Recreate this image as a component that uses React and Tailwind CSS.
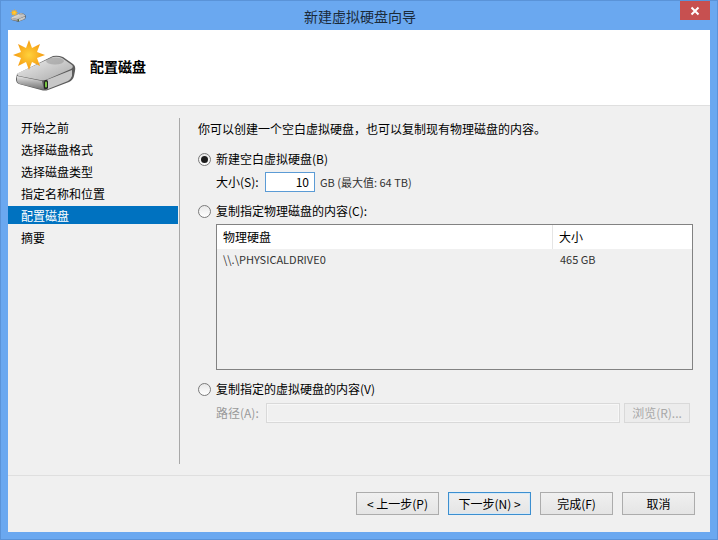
const font = '"Noto Sans CJK SC", "Liberation Sans", sans-serif';

const steps = ["开始之前", "选择磁盘格式", "选择磁盘类型", "指定名称和位置", "配置磁盘", "摘要"];

const DiskIcon = ({ size = 64, id = "a" }) => (
  <svg width={size} height={size * 0.875} viewBox="0 0 64 56">
    <defs>
      <linearGradient id={`${id}top`} x1="0" y1="0" x2="1" y2="1">
        <stop offset="0" stopColor="#f2f2f2" />
        <stop offset="1" stopColor="#a9a9a9" />
      </linearGradient>
      <linearGradient id={`${id}front`} x1="0" y1="0" x2="0" y2="1">
        <stop offset="0" stopColor="#e6e6e6" />
        <stop offset="0.5" stopColor="#a8a8a8" />
        <stop offset="1" stopColor="#6f6f6f" />
      </linearGradient>
      <radialGradient id={`${id}sun`}>
        <stop offset="0" stopColor="#ffd23c" />
        <stop offset="1" stopColor="#f59a10" />
      </radialGradient>
    </defs>
    <path d="M5 34 L41 16 Q46 15 51 17 L61 24 Q64 26 63 31 L62 36 Q61 40 57 42 L36 50 Q33 51 29 50 L7 44 Q4 43 4 39 Z" fill="#5c5c5c" />
    <path d="M6 33 L41 17 Q46 16 50 18 L60 25 Q62 27 59 29 L36 39 Q32 41 28 40 L7 36 Q4 35 6 33 Z" fill={`url(#${id}top)`} />
    <ellipse cx="43" cy="21" rx="9" ry="3.5" fill="#8f8f8f" opacity="0.5" />
    <path d="M5 36 L30 41 L32 50 L8 44 Q5 43 5 40 Z" fill={`url(#${id}front)`} />
    <path d="M32 41 L60 30 L60 36 Q59 39 56 41 L36 49 Q33 50 33 48 Z" fill="#c8c8c8" />
    <rect x="32" y="40" width="4" height="9" rx="1.5" fill="#222" />
    <rect x="33" y="41.5" width="2" height="6" rx="1" fill="#7ac943" />
    <path
      d="M17 0 L20 8 L28 4 L25 12 L33 15 L25 18 L28 26 L20 22 L17 30 L14 22 L6 26 L9 18 L1 15 L9 12 L6 4 L14 8 Z"
      fill={`url(#${id}sun)`}
    />
  </svg>
);

const Radio = ({ checked, label, disabled }) => (
  <label className="flex items-center h-[18px] text-[12px] leading-[18px] text-black">
    <span className="w-[13px] h-[13px] rounded-full border border-[#7a7a7a] bg-gradient-to-b from-[#e8e8e8] to-white flex items-center justify-center mr-[5px]">
      {checked && <span className="w-[7px] h-[7px] rounded-full bg-[#1c1c1c]" />}
    </span>
    <span className={disabled ? "text-[#8a8a8a]" : ""}>{label}</span>
  </label>
);

const Button = ({ children, primary, className = "" }) => (
  <button
    className={`h-[23px] border text-[12px] leading-[21px] text-black bg-gradient-to-b from-[#f0f0f0] to-[#e5e5e5] ${
      primary ? "border-[#3c8fd0] shadow-[inset_0_0_0_1px_#d6e9f7]" : "border-[#acacac]"
    } ${className}`}
  >
    {children}
  </button>
);

export default function App() {
  return (
    <div
      className="w-[718px] h-[540px] bg-[#6aa8f0] border border-[#5a93d8] flex flex-col overflow-hidden"
      style={{ fontFamily: font }}
    >
      {/* Title bar */}
      <div className="h-[29px] shrink-0 grid grid-cols-[1fr_auto_1fr] pl-[9px] pr-[7px]">
        <div className="pt-[8px]">
          <DiskIcon size={16} id="t" />
        </div>
        <div className="text-[14px] leading-[30px] text-[#1a2a3a]">新建虚拟硬盘向导</div>
        <div className="flex justify-end">
          <div className="w-[30px] h-[19px] bg-[#c75050] flex items-center justify-center">
            <svg width="10" height="10" viewBox="0 0 10 10">
              <path d="M1.5 1.5 L8.5 8.5 M8.5 1.5 L1.5 8.5" stroke="#fff" strokeWidth="2" />
            </svg>
          </div>
        </div>
      </div>

      <div className="w-[702px] ml-[7px] h-[502px] bg-[#f0f0f0] flex flex-col">
        {/* Header */}
        <div className="h-[76px] shrink-0 bg-white border-b border-[#dfdfdf] flex items-center pl-[4px]">
          <DiskIcon size={64} id="h" />
          <div className="ml-[14px] mt-[-2px] text-[14px] font-bold text-black">配置磁盘</div>
        </div>

        {/* Body */}
        <div className="flex h-[370px] shrink-0 border-b border-[#dfdfdf]">
          <div className="w-[170px] pt-[12px] flex flex-col gap-[4px]">
            {steps.map((step, i) => (
              <div
                key={step}
                className={`h-[18px] pl-[13px] text-[12px] leading-[19px] ${
                  i === 4 ? "bg-[#0072c0] text-white" : "text-black"
                }`}
              >
                {step}
              </div>
            ))}
          </div>

          <div className="w-px ml-[1px] mt-[12px] h-[346px] bg-[#a8a8a8]" />

          <div className="pl-[18px] pt-[14px] flex-1 text-[12px] text-black">
            <div className="h-[18px] leading-[18px]">你可以创建一个空白虚拟硬盘，也可以复制现有物理磁盘的内容。</div>

            <div className="mt-[12px]">
              <Radio checked label="新建空白虚拟硬盘(B)" />
            </div>
            <div className="mt-[4px] ml-[18px] flex items-center h-[20px]">
              <span className="w-[49px]">大小(S):</span>
              <div className="w-[50px] h-[20px] bg-white border border-[#5b9bd5] text-right pr-[5px] leading-[18px]">10</div>
              <span className="ml-[5px] text-[#333]" style={{ fontSize: 11 }}>GB (最大值: 64 TB)</span>
            </div>

            <div className="mt-[10px]">
              <Radio label="复制指定物理磁盘的内容(C):" />
            </div>

            <div className="mt-[4px] ml-[18px] w-[477px] h-[146px] border border-[#828282]">
              <div className="h-[24px] bg-white flex leading-[24px]">
                <div className="w-[336px] pl-[6px] border-r border-[#e5e5e5]">物理硬盘</div>
                <div className="pl-[6px]">大小</div>
              </div>
              <div className="flex h-[20px] leading-[20px] text-[11px] text-[#333]">
                <div className="w-[337px] pl-[6px]">\\.\PHYSICALDRIVE0</div>
                <div className="pl-[6px]">465 GB</div>
              </div>
            </div>

            <div className="mt-[10px]">
              <Radio label="复制指定的虚拟硬盘的内容(V)" />
            </div>
            <div className="mt-[5px] ml-[18px] flex items-center h-[20px] text-[#9a9a9a]">
              <span className="w-[50px]">路径(A):</span>
              <div className="w-[354px] h-[20px] border border-[#d9d9d9] bg-[#f0f0f0] shadow-[inset_0_0_0_1px_#f7f7f7]" />
              <div className="ml-[4px] w-[66px] h-[20px] border border-[#d9d9d9] bg-[#ececec] text-center leading-[18px] text-[#a8a8a8]">
                浏览(R)...
              </div>
            </div>
          </div>
        </div>

        {/* Footer */}
        <div className="flex-1 flex justify-end gap-[9px] pt-[16px] pr-[15px]">
          <Button className="w-[83px]">&lt; 上一步(P)</Button>
          <Button primary className="w-[83px]">下一步(N) &gt;</Button>
          <Button className="w-[73px]">完成(F)</Button>
          <Button className="w-[73px]">取消</Button>
        </div>
      </div>
    </div>
  );
}
